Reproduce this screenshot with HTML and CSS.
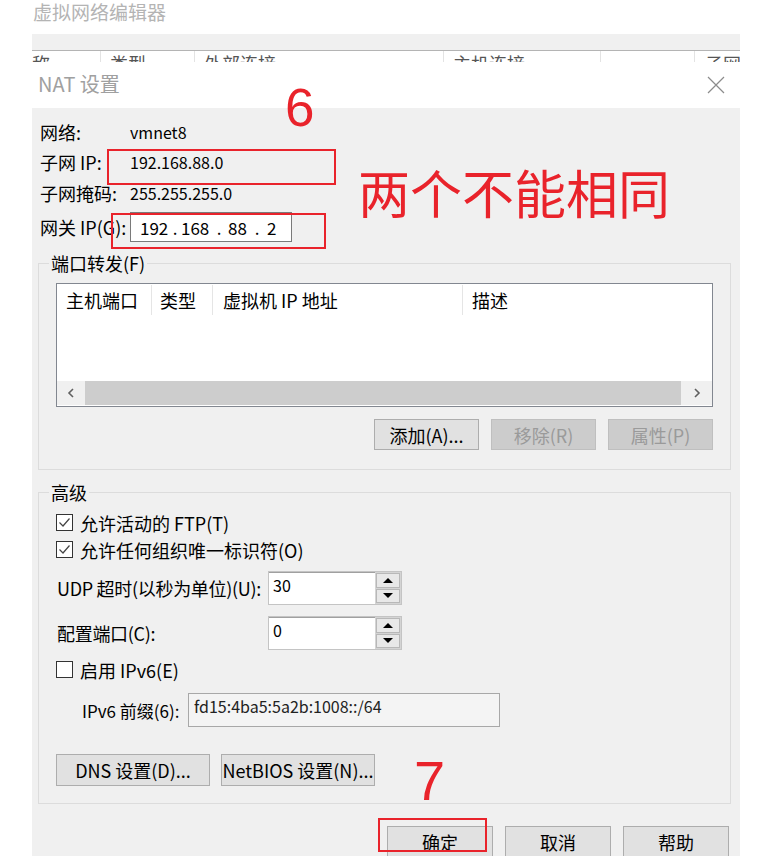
FILE: index.html
```html
<!DOCTYPE html>
<html>
<head>
  <meta charset="UTF-8">
  <title>NAT 设置</title>
  <link rel="stylesheet" href="styles.css">
</head>
<body>
  <div class="editor-title">虚拟网络编辑器</div>
  <div class="editor-toolbar"></div>
  <div class="editor-header">
    <span class="hcol hcol-name">名称</span>
    <span class="hcol hcol-type">类型</span>
    <span class="hcol hcol-ext">外部连接</span>
    <span class="hcol hcol-host">主机连接</span>
    <span class="hcol hcol-dhcp"></span>
    <span class="hcol hcol-subnet">子网</span>
  </div>

  <div class="dialog">
    <div class="titlebar">
      <span class="titlebar-text">NAT 设置</span>
      <svg class="close" width="18" height="18" viewBox="0 0 18 18">
        <path d="M1 1 L17 17 M17 1 L1 17" stroke="#8c8c8c" stroke-width="1.2" fill="none"/>
      </svg>
    </div>

    <div class="dialog-body">
      <div class="info">
        <div class="info-row">
          <span class="info-label">网络:</span>
          <span class="lat">vmnet8</span>
        </div>
        <div class="info-row">
          <span class="info-label">子网 IP:</span>
          <span class="lat">192.168.88.0</span>
        </div>
        <div class="info-row info-row-mask">
          <span class="info-label">子网掩码:</span>
          <span class="lat">255.255.255.0</span>
        </div>
        <div class="info-row info-row-gateway">
          <span class="info-label">网关 IP(G):</span>
          <div class="ip-field">
            <span class="ip-part ip-seg1">192</span><span class="ip-part ip-dot">.</span><span class="ip-part ip-seg2">168</span><span class="ip-part ip-dot">.</span><span class="ip-part ip-seg3">88</span><span class="ip-part ip-dot">.</span><span class="ip-part ip-seg4">2</span>
          </div>
        </div>
      </div>

      <div class="group group-ports">
        <div class="group-title">端口转发(F)</div>
        <div class="listview">
          <div class="lv-header">
            <span class="lv-col lv-col-port">主机端口</span>
            <span class="lv-col lv-col-type">类型</span>
            <span class="lv-col lv-col-ip">虚拟机 IP 地址</span>
            <span class="lv-col lv-col-desc">描述</span>
          </div>
          <div class="lv-rows"></div>
          <div class="hscroll">
            <span class="hscroll-btn">
              <svg width="8" height="10" viewBox="0 0 8 10"><path d="M6 1 L2 5 L6 9" stroke="#606060" stroke-width="1.6" fill="none"/></svg>
            </span>
            <span class="hscroll-thumb"></span>
            <span class="hscroll-btn hscroll-btn-right">
              <svg width="8" height="10" viewBox="0 0 8 10"><path d="M2 1 L6 5 L2 9" stroke="#606060" stroke-width="1.6" fill="none"/></svg>
            </span>
          </div>
        </div>
        <div class="button-row">
          <button class="btn btn-small">添加(A)...</button>
          <button class="btn btn-small" disabled>移除(R)</button>
          <button class="btn btn-small" disabled>属性(P)</button>
        </div>
      </div>

      <div class="group group-advanced">
        <div class="group-title">高级</div>

        <div class="check-row check-row-first">
          <span class="checkbox">
            <svg width="15" height="15" viewBox="0 0 15 15"><path d="M2.5 7.5 L6 11 L12.5 3.5" stroke="#444" stroke-width="1.2" fill="none"/></svg>
          </span>
          <span>允许活动的 FTP(T)</span>
        </div>
        <div class="check-row">
          <span class="checkbox">
            <svg width="15" height="15" viewBox="0 0 15 15"><path d="M2.5 7.5 L6 11 L12.5 3.5" stroke="#444" stroke-width="1.2" fill="none"/></svg>
          </span>
          <span>允许任何组织唯一标识符(O)</span>
        </div>

        <div class="field-row field-row-udp">
          <span class="field-label">UDP 超时(以秒为单位)(U):</span>
          <div class="spin">
            <span class="spin-value">30</span>
            <span class="spin-buttons">
              <span class="spin-btn"><span class="tri-up"></span></span>
              <span class="spin-btn"><span class="tri-down"></span></span>
            </span>
          </div>
        </div>
        <div class="field-row field-row-port">
          <span class="field-label">配置端口(C):</span>
          <div class="spin">
            <span class="spin-value">0</span>
            <span class="spin-buttons">
              <span class="spin-btn"><span class="tri-up"></span></span>
              <span class="spin-btn"><span class="tri-down"></span></span>
            </span>
          </div>
        </div>

        <div class="check-row check-row-ipv6">
          <span class="checkbox"></span>
          <span>启用 IPv6(E)</span>
        </div>

        <div class="field-row field-row-prefix">
          <span class="prefix-label">IPv6 前缀(6):</span>
          <div class="prefix-field">fd15:4ba5:5a2b:1008::/64</div>
        </div>

        <div class="button-row button-row-left">
          <button class="btn btn-wide">DNS 设置(D)...</button>
          <button class="btn btn-wide">NetBIOS 设置(N)...</button>
        </div>
      </div>

      <div class="button-row button-row-dialog">
        <button class="btn btn-dialog">确定</button>
        <button class="btn btn-dialog">取消</button>
        <button class="btn btn-dialog">帮助</button>
      </div>
    </div>

    <!-- red annotations drawn on top of the screenshot -->
    <div class="mark-box mark-subnet"></div>
    <div class="mark-box mark-gateway"></div>
    <div class="mark-box mark-ok"></div>
    <div class="mark-num mark-six">6</div>
    <div class="mark-num mark-seven">7</div>
    <div class="mark-note">两个不能相同</div>
  </div>
</body>
</html>
```

FILE: styles.css
```css
body {
  margin: 0;
  background: #fff;
  font-family: "Noto Sans CJK SC", "Noto Sans", sans-serif;
  font-size: 18px;
  color: #000;
  overflow: hidden;
}
.lat {
  font-size: 16px;
}

/* the editor window behind the dialog */
.editor-title {
  height: 35px;
  box-sizing: border-box;
  padding: 0 0 0 33px;
  font-size: 19px;
  line-height: 26px;
  margin-top: -1px;
  color: #b4b4b4;
}
.editor-toolbar {
  margin-left: 32px;
  width: 708px;
  height: 17px;
  box-sizing: border-box;
  background: #f0f0f0;
  border-bottom: 1px solid #b4b4b4;
}
.editor-header {
  margin-left: 32px;
  width: 708px;
  height: 11px;
  overflow: hidden;
  display: flex;
  background: #fff;
  color: #555;
  line-height: 18px;
}
.hcol {
  flex: none;
  height: 11px;
  padding: 3px 0 0 9px;
  box-sizing: border-box;
  border-right: 1px solid #e3e3e3;
  white-space: nowrap;
  overflow: hidden;
}
.hcol-name { width: 69px; padding-left: 0; text-indent: -18px; }
.hcol-type { width: 94px; }
.hcol-ext { width: 249px; }
.hcol-host { width: 157px; }
.hcol-dhcp { width: 94px; }
.hcol-subnet { flex: 1; border-right: 0; padding-left: 10px; }

/* dialog */
.dialog {
  position: relative;
  margin-left: 32px;
  width: 708px;
}
.titlebar {
  height: 46px;
  background: #fff;
  display: flex;
  align-items: center;
  justify-content: space-between;
  padding: 0 15px 0 6px;
}
.titlebar-text {
  font-size: 20px;
  line-height: 22px;
  margin-top: -2px;
  color: #a0a0a0;
}
.dialog-body {
  height: 748px;
  box-sizing: border-box;
  overflow: hidden;
  background: #f0f0f0;
  padding: 9px 9px 0 6px;
}

.info {
  padding-left: 2px;
}
.info-row {
  display: flex;
  align-items: center;
  height: 30px;
}
.info-row-mask {
  margin-top: 1px;
}
.info-row-gateway {
  margin-top: 4px;
}
.info-label {
  width: 90px;
  flex: none;
}
.ip-field {
  width: 162px;
  height: 30px;
  box-sizing: border-box;
  border: 1px solid #7a7a7a;
  background: #fff;
  display: flex;
  align-items: center;
  padding-left: 9px;
  font-size: 17px;
}
.ip-part {
  flex: none;
}
.ip-seg1 { width: 31px; }
.ip-dot { width: 8px; text-align: center; }
.ip-seg2 { width: 36px; padding-left: 2px; box-sizing: border-box; }
.ip-seg3 { width: 30px; padding-left: 5px; box-sizing: border-box; }
.ip-seg4 { padding-left: 6px; }

/* group boxes */
.group {
  border: 1px solid #dcdcdc;
  padding: 0 17px 19px;
}
.group-title {
  width: max-content;
  margin: -10px 0 0 -7px;
  padding: 0 2px;
  line-height: 18px;
  background: #f0f0f0;
}
.group-ports {
  margin-top: 21px;
}
.group-advanced {
  margin-top: 22px;
  padding-bottom: 17px;
}

.listview {
  margin-top: 11px;
  height: 124px;
  box-sizing: border-box;
  border: 1px solid #828790;
  background: #fff;
  display: flex;
  flex-direction: column;
  padding-bottom: 1px;
}
.lv-header {
  height: 32px;
  display: flex;
  flex: none;
}
.lv-col {
  flex: none;
  height: 30px;
  margin-top: 1px;
  line-height: 30px;
  padding-left: 9px;
  box-sizing: border-box;
  border-right: 1px solid #e5e5e5;
  white-space: nowrap;
}
.lv-col-port { width: 95px; }
.lv-col-type { width: 61px; padding-left: 8px; }
.lv-col-ip { width: 250px; padding-left: 10px; }
.lv-col-desc { flex: 1; border-right: 0; }
.lv-rows {
  flex: 1;
}
.hscroll {
  height: 24px;
  flex: none;
  display: flex;
  background: #f0f0f0;
}
.hscroll-btn {
  width: 28px;
  display: flex;
  align-items: center;
  justify-content: center;
}
.hscroll-btn-right {
  width: 31px;
}
.hscroll-thumb {
  flex: 1;
  background: #cdcdcd;
}

/* buttons */
.button-row {
  display: flex;
  justify-content: flex-end;
  margin-top: 12px;
}
.btn {
  font-family: inherit;
  font-size: 18px;
  color: #000;
  background: #e1e1e1;
  border: 1px solid #adadad;
  padding: 0;
  margin: 0;
}
.btn:disabled {
  background: #cccccc;
  border-color: #bfbfbf;
  color: #9a9a9a;
}
.btn-small {
  width: 105px;
  height: 31px;
  margin-left: 12px;
}
.btn-small:first-child {
  margin-left: 0;
}
.button-row-left {
  justify-content: flex-start;
  margin-top: 27px;
}
.btn-wide {
  width: 154px;
  height: 32px;
  margin-right: 11px;
}
.button-row-dialog {
  margin-top: 22px;
  padding-right: 2px;
}
.btn-dialog {
  width: 106px;
  height: 32px;
  margin-left: 12px;
}

/* advanced rows */
.check-row {
  display: flex;
  align-items: center;
  height: 27px;
}
.check-row-first {
  margin-top: 8px;
}
.check-row-ipv6 {
  margin-top: 6px;
}
.checkbox {
  width: 17px;
  height: 17px;
  box-sizing: border-box;
  border: 1px solid #333;
  background: #fff;
  margin-right: 7px;
  display: flex;
  align-items: center;
  justify-content: center;
}
.field-row {
  display: flex;
  align-items: center;
  height: 34px;
}
.field-row-udp {
  margin-top: 8px;
}
.field-row-port {
  margin-top: 11px;
}
.field-row-prefix {
  margin-top: 10px;
}
.field-label {
  width: 212px;
  flex: none;
  padding-left: 1px;
  box-sizing: border-box;
  white-space: nowrap;
  letter-spacing: -0.3px;
}
.spin {
  width: 134px;
  height: 34px;
  box-sizing: border-box;
  border: 1px solid #c4c4c4;
  display: flex;
}
.spin-value {
  flex: 1;
  background: #fff;
  border-top: 1px solid #a0a0a0;
  padding: 2px 4px;
  line-height: 20px;
  font-size: 16px;
}
.spin-buttons {
  width: 26px;
  display: flex;
  flex-direction: column;
  gap: 1px;
  padding: 1px;
  box-sizing: border-box;
  background: #d4d4d4;
}
.spin-btn {
  flex: 1;
  background: #e8e8e8;
  border: 1px solid #b8b8b8;
  display: flex;
  align-items: center;
  justify-content: center;
}
.tri-up, .tri-down {
  width: 0;
  height: 0;
  border-left: 5px solid transparent;
  border-right: 5px solid transparent;
}
.tri-up {
  border-bottom: 5px solid #000;
}
.tri-down {
  border-top: 5px solid #000;
}
.prefix-label {
  width: 106px;
  flex: none;
  padding-left: 26px;
  font-size: 17px;
  white-space: nowrap;
}
.prefix-field {
  width: 312px;
  height: 34px;
  box-sizing: border-box;
  border: 1px solid #a8a8a8;
  background: #f4f4f4;
  padding: 1px 5px;
  line-height: 22px;
  font-size: 16px;
  color: #222;
}

/* red annotations */
.mark-box {
  position: absolute;
  box-sizing: border-box;
  border: 2px solid #e9232b;
}
.mark-subnet {
  left: 75px;
  top: 87px;
  width: 229px;
  height: 36px;
}
.mark-gateway {
  left: 79px;
  top: 151px;
  width: 215px;
  height: 36px;
}
.mark-ok {
  left: 346px;
  top: 756px;
  width: 109px;
  height: 34px;
}
.mark-num {
  position: absolute;
  font-family: "Liberation Sans", sans-serif;
  line-height: 1;
  color: #e9232b;
}
.mark-six {
  left: 253px;
  top: 19px;
  font-size: 53px;
}
.mark-seven {
  left: 382px;
  top: 691px;
  font-size: 56px;
}
.mark-note {
  position: absolute;
  left: 326px;
  top: 104px;
  font-size: 52px;
  line-height: 1;
  color: #e9232b;
  white-space: nowrap;
}
```
